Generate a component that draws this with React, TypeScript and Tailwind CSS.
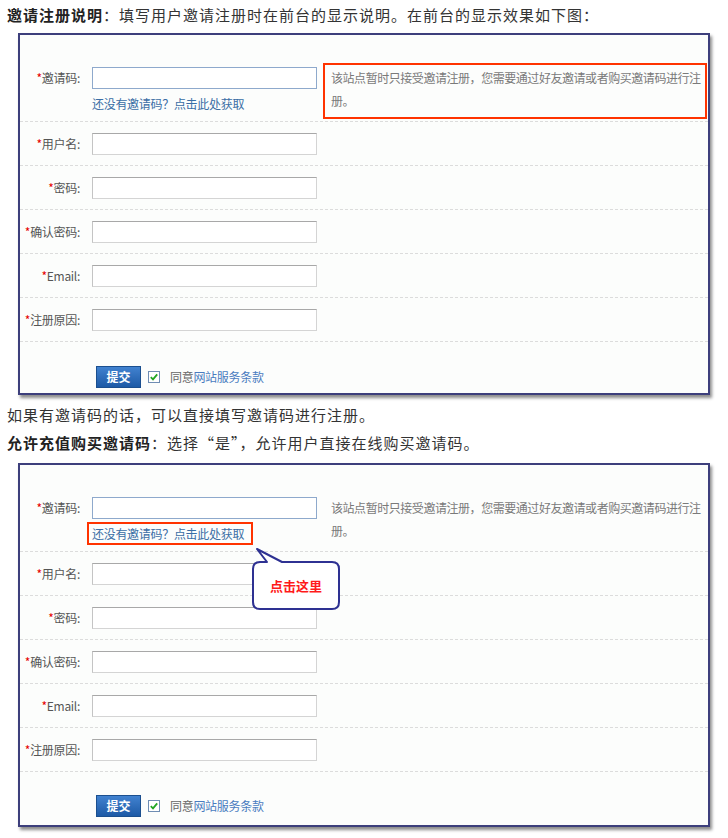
const FONT = "font-['Noto_Sans_CJK_SC','Liberation_Sans',sans-serif]";

const fields = ["用户名", "密码", "确认密码", "Email", "注册原因"];

function Label({ text }: { text: string }) {
  return (
    <div className="w-[60px] shrink-0 text-right text-[12px] leading-[22px] tracking-[-0.3px] text-[#555]">
      <span className="text-[#e60000]">*</span>
      {text}:
    </div>
  );
}

function TextBox({ active = false }: { active?: boolean }) {
  return (
    <input
      readOnly
      className={`block h-[22px] w-[225px] border bg-white ${
        active ? "border-[#8ea9cc]" : "border-[#d4d4d4] border-t-[#a8a8a8] border-l-[#c4c4c4]"
      }`}
    />
  );
}

function CheckBox() {
  return (
    <svg width="12" height="12" viewBox="0 0 12 12" className="shrink-0">
      <rect x="0.5" y="0.5" width="11" height="11" fill="#fff" stroke="#6f8db3" />
      <path d="M2.8 6.2 L5 8.4 L9.2 3.4" fill="none" stroke="#22a622" strokeWidth="1.8" />
    </svg>
  );
}

function Callout() {
  return (
    <>
      <svg width="92" height="67" viewBox="0 0 92 67" className="absolute left-[230px] top-[80px]">
        <path
          d="M10 17 L17 17 L7 4 L32 17 L82 17 Q89 17 89 24 L89 57 Q89 64 82 64 L10 64 Q3 64 3 57 L3 24 Q3 17 10 17 Z"
          fill="#fff"
          stroke="#2e3192"
          strokeWidth="2"
          strokeLinejoin="round"
        />
      </svg>
      <div className="absolute left-[233px] top-[97px] flex h-[47px] w-[86px] items-center justify-center text-[13px] font-bold text-[#ff1a1a]">
        点击这里
      </div>
    </>
  );
}

function RegisterShot({ second = false }: { second?: boolean }) {
  return (
    <div
      className={`relative ml-[18px] w-[692px] border-2 border-[#3d3f7c] bg-[#fcfdfc] shadow-[2px_3px_3px_rgba(0,0,0,0.45)] ${
        second ? "h-[364px]" : "h-[362px]"
      }`}
    >
      <div className="flex h-[87px] border-b border-dashed border-[#dcdcdc]">
        <div className="pt-[32px]">
          <Label text="邀请码" />
        </div>
        <div className="ml-[12px] w-[225px] pt-[32px]">
          <TextBox active />
          <div className="-ml-[5px] mt-[1px] whitespace-nowrap">
            <span
              className={`inline-block border-2 pl-[3px] pr-[7px] text-[12px] leading-[19px] tracking-[-0.3px] text-[#3a6ea5] ${
                second ? "border-[#ff3300]" : "border-transparent"
              }`}
            >
              还没有邀请码？点击此处获取
            </span>
          </div>
        </div>
        <div
          className={`ml-[6px] mt-[28px] h-[56px] w-[384px] whitespace-nowrap border-2 pl-[6px] pt-[1px] text-[12px] leading-[23px] tracking-[-0.45px] text-[#7a7a7a] ${
            second ? "border-transparent" : "border-[#ff3300]"
          }`}
        >
          该站点暂时只接受邀请注册，您需要通过好友邀请或者购买邀请码进行注
          <br />
          册。
        </div>
      </div>

      {fields.map((f) => (
        <div key={f} className="flex h-[44px] items-center border-b border-dashed border-[#dcdcdc]">
          <Label text={f} />
          <div className="ml-[12px]">
            <TextBox />
          </div>
        </div>
      ))}

      <div className={`flex items-start pl-[76px] ${second ? "pt-[23px]" : "pt-[24px]"}`}>
        <button className="h-[22px] w-[45px] border border-[#1b4f8f] bg-gradient-to-b from-[#4182d0] to-[#1d5aa6] text-[12px] font-bold leading-[20px] text-white">
          提交
        </button>
        <div className="ml-[7px] mt-[5px]">
          <CheckBox />
        </div>
        <div className="ml-[10px] text-[12px] leading-[22px] tracking-[-0.3px] text-[#666]">
          同意<span className="text-[#4a7cc0]">网站服务条款</span>
        </div>
      </div>

      {second && <Callout />}
    </div>
  );
}

export default function App() {
  return (
    <div className={`h-[838px] w-[728px] overflow-hidden bg-white text-[#333] ${FONT}`}>
      <p className="h-[33px] pl-[7px] pt-[4px] text-[15px] leading-[22px] tracking-[1px]">
        <b className="text-[#222]">邀请注册说明</b>：填写用户邀请注册时在前台的显示说明。在前台的显示效果如下图：
      </p>
      <RegisterShot />
      <p className="pl-[7px] pt-[9px] text-[15px] leading-[22px] tracking-[1px]">
        如果有邀请码的话，可以直接填写邀请码进行注册。
      </p>
      <p className="mt-[6px] pl-[7px] text-[15px] leading-[22px] tracking-[1px]">
        <b className="text-[#222]">允许充值购买邀请码</b>：选择“是”，允许用户直接在线购买邀请码。
      </p>
      <div className="mt-[9px]">
        <RegisterShot second />
      </div>
    </div>
  );
}
